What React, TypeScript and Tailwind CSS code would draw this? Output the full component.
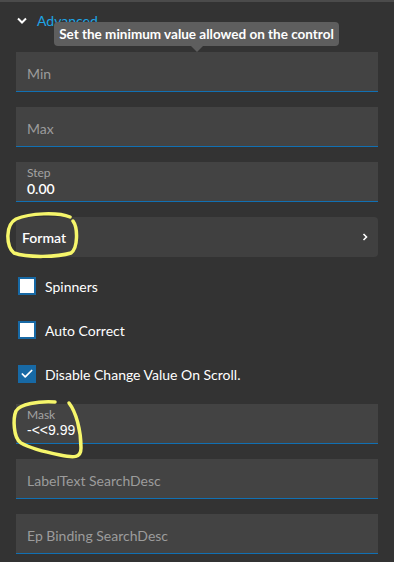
import { Check } from "lucide-react";

const font = { fontFamily: "Lato, 'Open Sans', sans-serif" };

const Field = ({ label, value, mono }: { label: string; value?: string; mono?: boolean }) => {
  if (value === undefined) {
    return (
      <div className="h-[40px] bg-[#434343] border-b border-[#1170b3] flex items-center px-[11px] pt-[3px]">
        <span className="text-[14px] text-[#9c9c9c]">{label}</span>
      </div>
    );
  }
  return (
    <div className="h-[40px] bg-[#434343] border-b border-[#1170b3] flex flex-col justify-center px-[11px]">
      <span className="text-[12px] leading-[14px] text-[#a3a3a3]">{label}</span>
      <span
        className={
          mono
            ? "text-[14px] leading-[17px] text-white font-['Liberation_Sans',Arial,sans-serif]"
            : "text-[14px] leading-[17px] text-white font-semibold"
        }
      >
        {value}
      </span>
    </div>
  );
};

const CheckRow = ({ label, checked }: { label: string; checked?: boolean }) => (
  <div className="h-[44px] flex items-center gap-[9px] pl-[2px]">
    {checked ? (
      <div className="w-[18px] h-[18px] bg-[#1769a5] flex items-center justify-center">
        <Check size={14} strokeWidth={3} color="white" />
      </div>
    ) : (
      <div className="w-[18px] h-[18px] bg-white border-2 border-[#1769a5]" />
    )}
    <span className="text-[14px] text-white">{label}</span>
  </div>
);

export default function App() {
  return (
    <div
      className="relative w-[394px] h-[562px] overflow-hidden bg-[#333333] border-t-2 border-[#4b4b4b]"
      style={font}
    >
      <div className="h-[50px] pt-[8px] pl-[17px]">
        <div className="flex items-center gap-[10px] h-[20px]">
          <svg width="10" height="7" viewBox="0 0 10 7">
            <path d="M1 1.5 L5 5.5 L9 1.5" stroke="white" strokeWidth="2" fill="none" />
          </svg>
          <span className="text-[14px] text-[#1ea4e6]">Advanced</span>
        </div>
      </div>

      <div className="px-4 flex flex-col">
        <div className="flex flex-col gap-[15px]">
          <Field label="Min" />
          <Field label="Max" />
          <Field label="Step" value="0.00" />
          <div className="h-[40px] bg-[#404040] rounded-[4px] flex items-center justify-between pl-[6px] pr-[10px]">
            <span className="text-[14px] text-white font-semibold">Format</span>
            <svg width="6" height="8" viewBox="0 0 6 8">
              <path d="M1.5 1 L4.5 4 L1.5 7" stroke="white" strokeWidth="1.6" fill="none" />
            </svg>
          </div>
        </div>

        <div className="mt-[7px]">
          <CheckRow label="Spinners" />
          <CheckRow label="Auto Correct" />
          <CheckRow label="Disable Change Value On Scroll." checked />
        </div>

        <div className="mt-[8px] flex flex-col gap-[15px]">
          <Field label="Mask" value="-<<9.99" mono />
          <Field label="LabelText SearchDesc" />
          <Field label="Ep Binding SearchDesc" />
        </div>
      </div>

      <div className="absolute left-[54px] top-[20px] w-[285px] h-[24px] bg-[#5e5e5e] rounded-[4px] flex items-center justify-center">
        <span className="text-[13.5px] font-bold text-white">Set the minimum value allowed on the control</span>
        <div className="absolute left-[137px] top-[24px] w-0 h-0 border-l-[6px] border-r-[6px] border-t-[6px] border-l-transparent border-r-transparent border-t-[#5e5e5e]" />
      </div>

      <svg className="absolute left-0 top-0 pointer-events-none" width="394" height="562" viewBox="0 0 394 562">
        <path
          d="M70 215 C58 210 30 211 16 217 C5 223 6 244 14 251 C28 256 58 255 71 251 C78 246 78 226 73 219"
          stroke="#f6f66b"
          strokeWidth="3.5"
          fill="none"
          strokeLinecap="round"
        />
        <path
          d="M69 401 C76 410 81 428 81 446 C81 456 74 456 60 453 C45 450 30 446 21 441 C13 436 13 416 16 409 C20 402 38 399 55 400"
          stroke="#f6f66b"
          strokeWidth="3.5"
          fill="none"
          strokeLinecap="round"
        />
      </svg>
    </div>
  );
}
